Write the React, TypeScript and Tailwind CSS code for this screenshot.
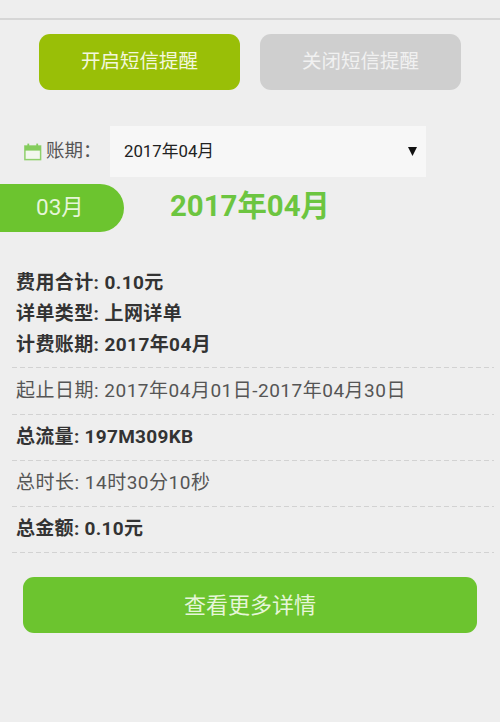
const font = { fontFamily: '"Roboto", "Noto Sans CJK SC", sans-serif' };

function CalendarIcon() {
  return (
    <svg width="18" height="19" viewBox="0 0 18 19" className="shrink-0">
      <rect x="0.9" y="4" width="15.7" height="13.6" fill="#f2f7ee" stroke="#8fd06c" strokeWidth="1.5" />
      <rect x="0.9" y="4" width="15.7" height="4.6" fill="#84cc5c" />
      <rect x="3.4" y="1.6" width="1.8" height="3.6" fill="#84cc5c" />
      <rect x="12.3" y="1.6" width="1.8" height="3.6" fill="#84cc5c" />
    </svg>
  );
}

function Divider() {
  return <div className="h-px bg-[repeating-linear-gradient(90deg,#d2d2d2_0_5px,transparent_5px_8px)]" />;
}

function Row({ children, bold }: { children: React.ReactNode; bold?: boolean }) {
  return (
    <>
      <div
        className={`h-[45.2px] pl-[4px] flex items-center text-[19px] ${
          bold ? "font-bold text-[#333333] tracking-[0.3px]" : "text-[#555555] tracking-[0.5px]"
        }`}
      >
        {children}
      </div>
      <Divider />
    </>
  );
}

export default function App() {
  return (
    <div style={font} className="w-[500px] h-[722px] overflow-hidden bg-[#eeeeee]">
      <div className="h-[20px] border-b-2 border-[#d6d6d6]" />
      <div className="flex justify-center gap-[20px] pt-[14px]">
        <div className="w-[201px] h-[56px] rounded-[11px] bg-[#99bf07] text-[#f3f7dd] text-[19.5px] flex items-center justify-center">
          开启短信提醒
        </div>
        <div className="w-[201px] h-[56px] rounded-[11px] bg-[#cfcfcf] text-[#f1f1f1] text-[19.5px] flex items-center justify-center">
          关闭短信提醒
        </div>
      </div>
      <div className="flex items-center h-[51px] mt-[36px] pl-[24px]">
        <CalendarIcon />
        <span className="ml-[4px] w-[64px] text-[18.5px] text-[#555555] whitespace-pre">账期：</span>
        <div className="w-[316px] h-[51px] bg-[#f7f7f7] flex items-center justify-between pl-[14px] pr-[9px] text-[16.8px] text-[#222222]">
          <span className="pt-[1px]">2017年04月</span>
          <svg width="9" height="9" viewBox="0 0 9 9">
            <path d="M0 0H9L4.5 9Z" fill="#111111" />
          </svg>
        </div>
      </div>
      <div className="flex items-center mt-[7px]">
        <div className="w-[124px] h-[48px] rounded-r-[24px] bg-[#6cc42f] text-[#e6f6d8] text-[22.5px] flex items-center pl-[36px]">
          03月
        </div>
        <div className="ml-[46px] text-[#6cc540] text-[29.4px] font-bold leading-none -mt-[2px]">2017年04月</div>
      </div>
      <div className="mt-[35px] pl-[12px] pr-[6px]">
        <div className="pl-[4px] pb-[7.4px] text-[19px] tracking-[0.4px] font-bold text-[#333333] leading-[31px]">
          <div>费用合计: 0.10元</div>
          <div>详单类型: 上网详单</div>
          <div>计费账期: 2017年04月</div>
        </div>
        <Divider />
        <Row>起止日期: 2017年04月01日-2017年04月30日</Row>
        <Row bold>总流量: 197M309KB</Row>
        <Row>总时长: 14时30分10秒</Row>
        <Row bold>总金额: 0.10元</Row>
      </div>
      <div className="mx-[23px] mt-[24px] h-[56px] rounded-[11px] bg-[#6cc42f] text-[#e6f6d8] text-[22px] flex items-center justify-center">
        查看更多详情
      </div>
    </div>
  );
}
